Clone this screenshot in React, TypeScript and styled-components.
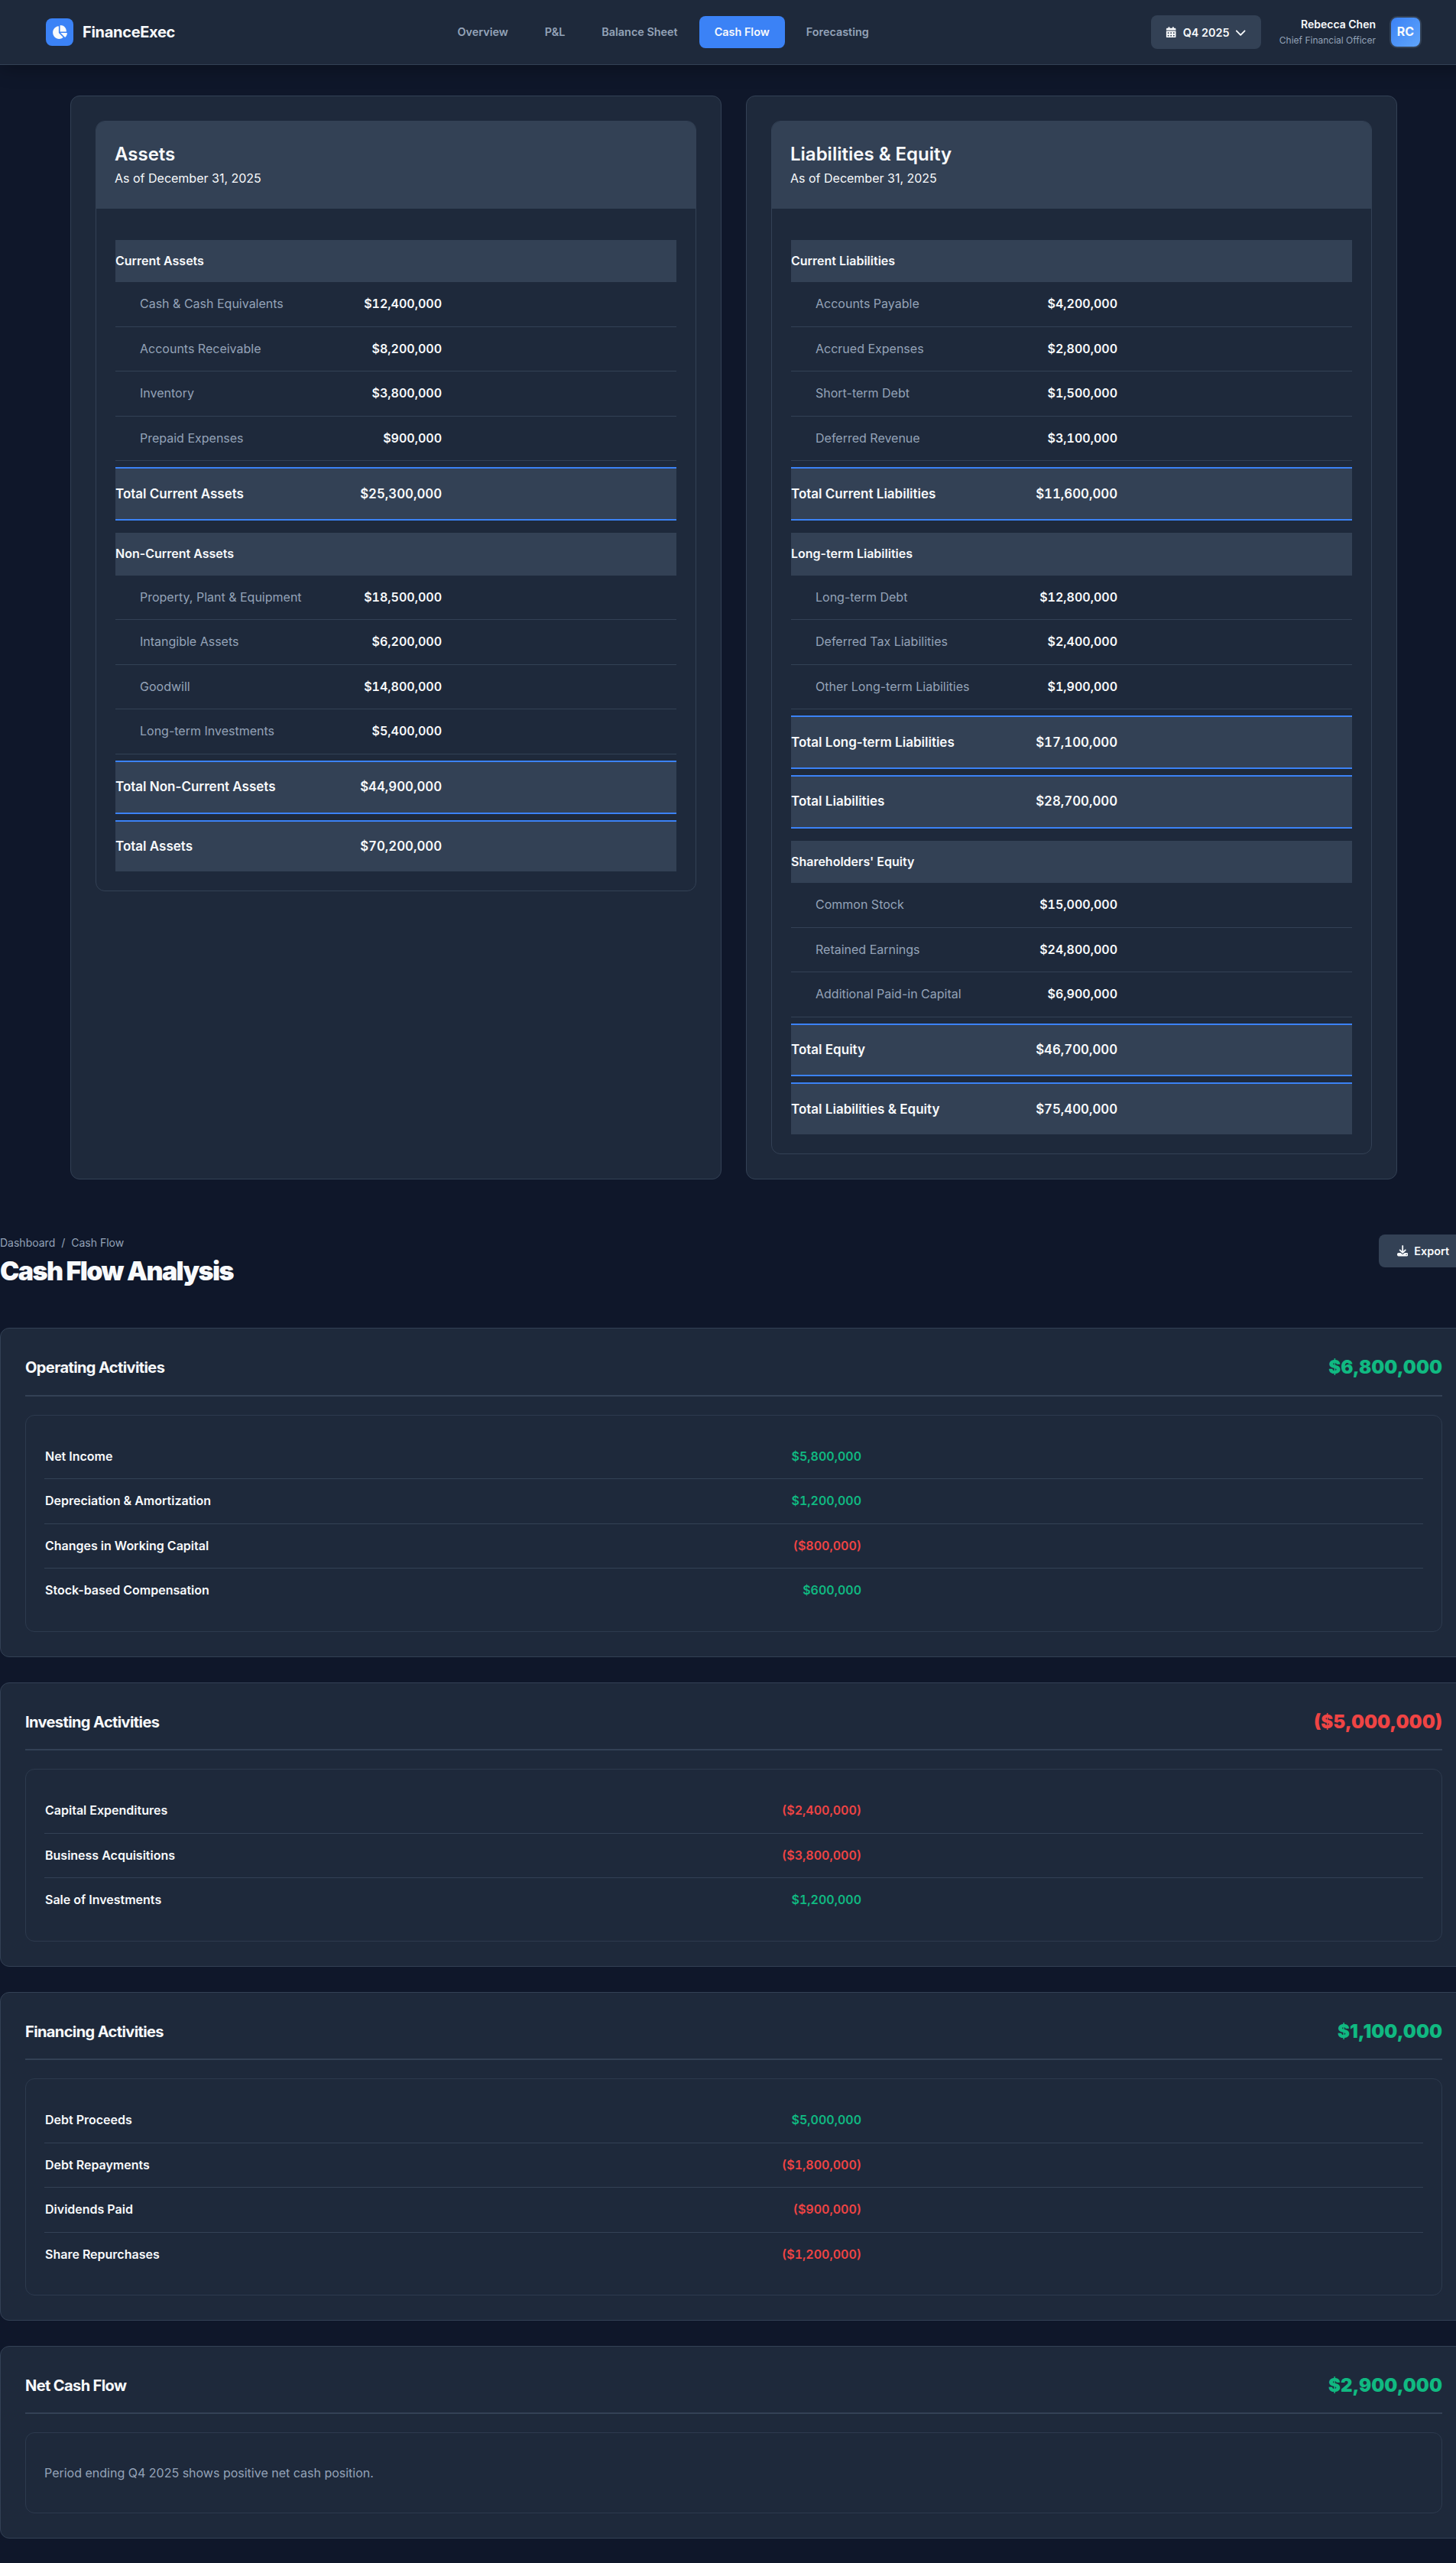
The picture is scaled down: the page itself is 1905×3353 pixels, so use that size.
import React from "react";
import styled, { createGlobalStyle } from "styled-components";
import { FaCalendarDays, FaChartPie, FaChevronDown, FaDownload } from "react-icons/fa6";

const GlobalStyle = createGlobalStyle`
  html, body {
    margin: 0;
    padding: 0;
    background: #0f172a;
    overflow-x: hidden;
  }
  * {
    box-sizing: border-box;
  }
`;

const Page = styled.div`
  width: 1920px;
  background: #0f172a;
  color: #f8fafc;
  font-family: Inter, "Liberation Sans", sans-serif;
  font-size: 16px;
  line-height: 1.6;
  padding-bottom: 33px;
`;

const Header = styled.header`
  display: flex;
  justify-content: space-between;
  align-items: center;
  height: 85px;
  padding: 0 60px;
  background: #1e293b;
  border-bottom: 1px solid #334155;
  box-shadow: 0 4px 24px rgba(0, 0, 0, 0.3);
`;

const Brand = styled.div`
  display: flex;
  align-items: center;
  gap: 12px;
  font-size: 20px;
  font-weight: 700;
  letter-spacing: -0.3px;
`;

const LogoMark = styled.div`
  display: flex;
  align-items: center;
  justify-content: center;
  width: 36px;
  height: 36px;
  border-radius: 8px;
  background: #3b82f6;
  font-size: 20px;
`;

const Nav = styled.nav`
  display: flex;
  gap: 8px;
`;

const NavItem = styled.a<{ $active?: boolean }>`
  padding: 9.5px 20px;
  border-radius: 8px;
  font-size: 14.4px;
  font-weight: 600;
  color: ${(p) => (p.$active ? "#f8fafc" : "#94a3b8")};
  background: ${(p) => (p.$active ? "#3b82f6" : "transparent")};
`;

const HeaderRight = styled.div`
  display: flex;
  align-items: center;
  gap: 24px;
`;

const PeriodButton = styled.button`
  display: flex;
  align-items: center;
  gap: 8px;
  height: 44px;
  padding: 0 19px;
  border: none;
  border-radius: 8px;
  background: #334155;
  color: #f8fafc;
  font-family: inherit;
  font-size: 14.4px;
  font-weight: 600;
`;

const UserInfo = styled.div`
  display: flex;
  align-items: center;
  gap: 18px;
`;

const UserText = styled.div`
  text-align: right;
`;

const UserName = styled.div`
  font-size: 14px;
  font-weight: 600;
  line-height: 22px;
`;

const UserRole = styled.div`
  font-size: 12px;
  line-height: 20px;
  color: #94a3b8;
`;

const Avatar = styled.div`
  display: flex;
  align-items: center;
  justify-content: center;
  width: 42px;
  height: 42px;
  border: 2px solid #334155;
  border-radius: 10px;
  background: linear-gradient(135deg, #3b82f6, #60a5fa);
  font-size: 16px;
  font-weight: 700;
`;

const BalanceGrid = styled.main`
  display: grid;
  grid-template-columns: 1fr 1fr;
  gap: 32px;
  max-width: 1800px;
  margin: 0 auto;
  padding: 40px 32px 32px;
`;

const OuterCard = styled.section`
  padding: 32px;
  background: #1e293b;
  border: 1px solid #334155;
  border-radius: 12px;
`;

const StatementPanel = styled.div`
  border: 1px solid #334155;
  border-radius: 12px;
  overflow: hidden;
`;

const StatementHeader = styled.div`
  height: 114px;
  padding: 24px;
  background: #334155;
`;

const StatementTitle = styled.h2`
  margin: 0;
  font-size: 24px;
  font-weight: 600;
  line-height: 38.4px;
`;

const StatementDate = styled.div`
  font-size: 16px;
`;

const StatementBody = styled.div`
  padding: 25px;
`;

const SectionBar = styled.div`
  margin-top: 16px;
  padding: 15px 0;
  background: #334155;
  font-weight: 600;

  &:first-child {
    padding-bottom: 14.5px;
  }
`;

const LineRow = styled.div`
  padding: 16px 0;
  border-bottom: 1px solid #334155;
  color: #94a3b8;
`;

const TotalRow = styled.div`
  margin-top: 8px;
  padding: 19.2px 0;
  background: #334155;
  border-top: 2px solid #3b82f6;
  border-bottom: 2px solid #3b82f6;
  font-size: 17px;
  font-weight: 600;
`;

const GrandRow = styled(TotalRow)`
  border-bottom: none;
`;

const RowCells = styled.div<{ $indent?: boolean }>`
  display: flex;
  justify-content: space-between;
  width: 427px;
  padding-left: ${(p) => (p.$indent ? "32px" : "0")};
`;

const LineAmount = styled.span`
  font-weight: 600;
  font-variant-numeric: tabular-nums;
  color: #f8fafc;
`;

const TotalAmount = styled.span`
  font-size: 16.8px;
  font-variant-numeric: tabular-nums;
`;

const CashSection = styled.div`
  width: 1920px;
`;

const CashTop = styled.div`
  display: flex;
  justify-content: space-between;
  align-items: flex-start;
  margin-top: 40px;
  margin-bottom: 53px;
`;

const Crumbs = styled.div`
  display: flex;
  gap: 8px;
  font-size: 14px;
  color: #94a3b8;
`;

const PageTitle = styled.h1`
  margin: 6px 0 0;
  font-size: 34px;
  font-weight: 900;
  line-height: 1.2;
  letter-spacing: -1.6px;
`;

const ExportButton = styled.button`
  display: flex;
  align-items: center;
  gap: 8px;
  height: 43px;
  padding: 0 24px;
  border: none;
  border-radius: 8px;
  background: #334155;
  color: #f8fafc;
  font-family: inherit;
  font-size: 14.4px;
  font-weight: 600;
`;

const CashList = styled.div`
  display: flex;
  flex-direction: column;
  gap: 32.7px;
`;

const CashCard = styled.section`
  padding: 32px;
  background: #1e293b;
  border: 1px solid #334155;
  border-radius: 12px;
`;

const CashCardHeader = styled.div`
  display: flex;
  justify-content: space-between;
  align-items: center;
  padding-bottom: 16px;
  margin-bottom: 24px;
  border-bottom: 2px solid #334155;
`;

const CashCardTitle = styled.h3`
  margin: 0;
  font-size: 20px;
  font-weight: 700;
  letter-spacing: -0.6px;
`;

const CashAmount = styled.div<{ $negative?: boolean }>`
  font-size: 24px;
  font-weight: 900;
  line-height: 38.4px;
  color: ${(p) => (p.$negative ? "#ef4444" : "#10b981")};
`;

const CashPanel = styled.div`
  padding: 25px 24px 23px;
  border: 1px solid #2d3a4e;
  border-radius: 12px;
`;

const CashRow = styled.div`
  padding: 16px 0;
  border-bottom: 1px solid #334155;
  font-weight: 600;

  &:last-child {
    border-bottom-color: transparent;
  }
`;

const CashCells = styled.div`
  display: flex;
  justify-content: space-between;
  width: 1069px;
  padding-left: 1px;
`;

const CashValue = styled.span<{ $negative?: boolean }>`
  font-variant-numeric: tabular-nums;
  color: ${(p) => (p.$negative ? "#ef4444" : "#10b981")};
`;

const CashNote = styled.p`
  margin: 0;
  padding: 14.2px 0 16.2px;
  color: #94a3b8;
`;

type Line = { label: string; value: string };
type Block =
  | { kind: "section"; label: string }
  | { kind: "line" | "total" | "grand"; label: string; value: string };

const section = (label: string): Block => ({ kind: "section", label });
const line = (label: string, value: string): Block => ({ kind: "line", label, value });
const total = (label: string, value: string): Block => ({ kind: "total", label, value });
const grand = (label: string, value: string): Block => ({ kind: "grand", label, value });

const assets: Block[] = [
  section("Current Assets"),
  line("Cash & Cash Equivalents", "$12,400,000"),
  line("Accounts Receivable", "$8,200,000"),
  line("Inventory", "$3,800,000"),
  line("Prepaid Expenses", "$900,000"),
  total("Total Current Assets", "$25,300,000"),
  section("Non-Current Assets"),
  line("Property, Plant & Equipment", "$18,500,000"),
  line("Intangible Assets", "$6,200,000"),
  line("Goodwill", "$14,800,000"),
  line("Long-term Investments", "$5,400,000"),
  total("Total Non-Current Assets", "$44,900,000"),
  grand("Total Assets", "$70,200,000"),
];

const liabilities: Block[] = [
  section("Current Liabilities"),
  line("Accounts Payable", "$4,200,000"),
  line("Accrued Expenses", "$2,800,000"),
  line("Short-term Debt", "$1,500,000"),
  line("Deferred Revenue", "$3,100,000"),
  total("Total Current Liabilities", "$11,600,000"),
  section("Long-term Liabilities"),
  line("Long-term Debt", "$12,800,000"),
  line("Deferred Tax Liabilities", "$2,400,000"),
  line("Other Long-term Liabilities", "$1,900,000"),
  total("Total Long-term Liabilities", "$17,100,000"),
  total("Total Liabilities", "$28,700,000"),
  section("Shareholders' Equity"),
  line("Common Stock", "$15,000,000"),
  line("Retained Earnings", "$24,800,000"),
  line("Additional Paid-in Capital", "$6,900,000"),
  total("Total Equity", "$46,700,000"),
  grand("Total Liabilities & Equity", "$75,400,000"),
];

const cashCards: { title: string; amount: string; rows: Line[] }[] = [
  {
    title: "Operating Activities",
    amount: "$6,800,000",
    rows: [
      { label: "Net Income", value: "$5,800,000" },
      { label: "Depreciation & Amortization", value: "$1,200,000" },
      { label: "Changes in Working Capital", value: "($800,000)" },
      { label: "Stock-based Compensation", value: "$600,000" },
    ],
  },
  {
    title: "Investing Activities",
    amount: "($5,000,000)",
    rows: [
      { label: "Capital Expenditures", value: "($2,400,000)" },
      { label: "Business Acquisitions", value: "($3,800,000)" },
      { label: "Sale of Investments", value: "$1,200,000" },
    ],
  },
  {
    title: "Financing Activities",
    amount: "$1,100,000",
    rows: [
      { label: "Debt Proceeds", value: "$5,000,000" },
      { label: "Debt Repayments", value: "($1,800,000)" },
      { label: "Dividends Paid", value: "($900,000)" },
      { label: "Share Repurchases", value: "($1,200,000)" },
    ],
  },
];

function StatementRow({ block }: { block: Block }) {
  if (block.kind === "section") return <SectionBar>{block.label}</SectionBar>;
  if (block.kind === "line") {
    return (
      <LineRow>
        <RowCells $indent>
          <span>{block.label}</span>
          <LineAmount>{block.value}</LineAmount>
        </RowCells>
      </LineRow>
    );
  }
  const Row = block.kind === "grand" ? GrandRow : TotalRow;
  return (
    <Row>
      <RowCells>
        <span>{block.label}</span>
        <TotalAmount>{block.value}</TotalAmount>
      </RowCells>
    </Row>
  );
}

function Statement({ title, blocks }: { title: string; blocks: Block[] }) {
  return (
    <OuterCard>
      <StatementPanel>
        <StatementHeader>
          <StatementTitle>{title}</StatementTitle>
          <StatementDate>As of December 31, 2025</StatementDate>
        </StatementHeader>
        <StatementBody>
          {blocks.map((b) => (
            <StatementRow key={b.label} block={b} />
          ))}
        </StatementBody>
      </StatementPanel>
    </OuterCard>
  );
}

export default function App() {
  return (
    <Page>
      <GlobalStyle />
      <Header>
        <Brand>
          <LogoMark>
            <FaChartPie />
          </LogoMark>
          FinanceExec
        </Brand>
        <Nav>
          <NavItem>Overview</NavItem>
          <NavItem>P&amp;L</NavItem>
          <NavItem>Balance Sheet</NavItem>
          <NavItem $active>Cash Flow</NavItem>
          <NavItem>Forecasting</NavItem>
        </Nav>
        <HeaderRight>
          <PeriodButton>
            <FaCalendarDays />
            Q4 2025
            <FaChevronDown />
          </PeriodButton>
          <UserInfo>
            <UserText>
              <UserName>Rebecca Chen</UserName>
              <UserRole>Chief Financial Officer</UserRole>
            </UserText>
            <Avatar>RC</Avatar>
          </UserInfo>
        </HeaderRight>
      </Header>
      <BalanceGrid>
        <Statement title="Assets" blocks={assets} />
        <Statement title="Liabilities & Equity" blocks={liabilities} />
      </BalanceGrid>
      <CashSection>
        <CashTop>
          <div>
            <Crumbs>
              <span>Dashboard</span>
              <span>/</span>
              <span>Cash Flow</span>
            </Crumbs>
            <PageTitle>Cash Flow Analysis</PageTitle>
          </div>
          <ExportButton>
            <FaDownload />
            Export
          </ExportButton>
        </CashTop>
        <CashList>
          {cashCards.map((c) => (
            <CashCard key={c.title}>
              <CashCardHeader>
                <CashCardTitle>{c.title}</CashCardTitle>
                <CashAmount $negative={c.amount.startsWith("(")}>{c.amount}</CashAmount>
              </CashCardHeader>
              <CashPanel>
                {c.rows.map((r) => (
                  <CashRow key={r.label}>
                    <CashCells>
                      <span>{r.label}</span>
                      <CashValue $negative={r.value.startsWith("(")}>{r.value}</CashValue>
                    </CashCells>
                  </CashRow>
                ))}
              </CashPanel>
            </CashCard>
          ))}
          <CashCard>
            <CashCardHeader>
              <CashCardTitle>Net Cash Flow</CashCardTitle>
              <CashAmount>$2,900,000</CashAmount>
            </CashCardHeader>
            <CashPanel>
              <CashNote>Period ending Q4 2025 shows positive net cash position.</CashNote>
            </CashPanel>
          </CashCard>
        </CashList>
      </CashSection>
    </Page>
  );
}
